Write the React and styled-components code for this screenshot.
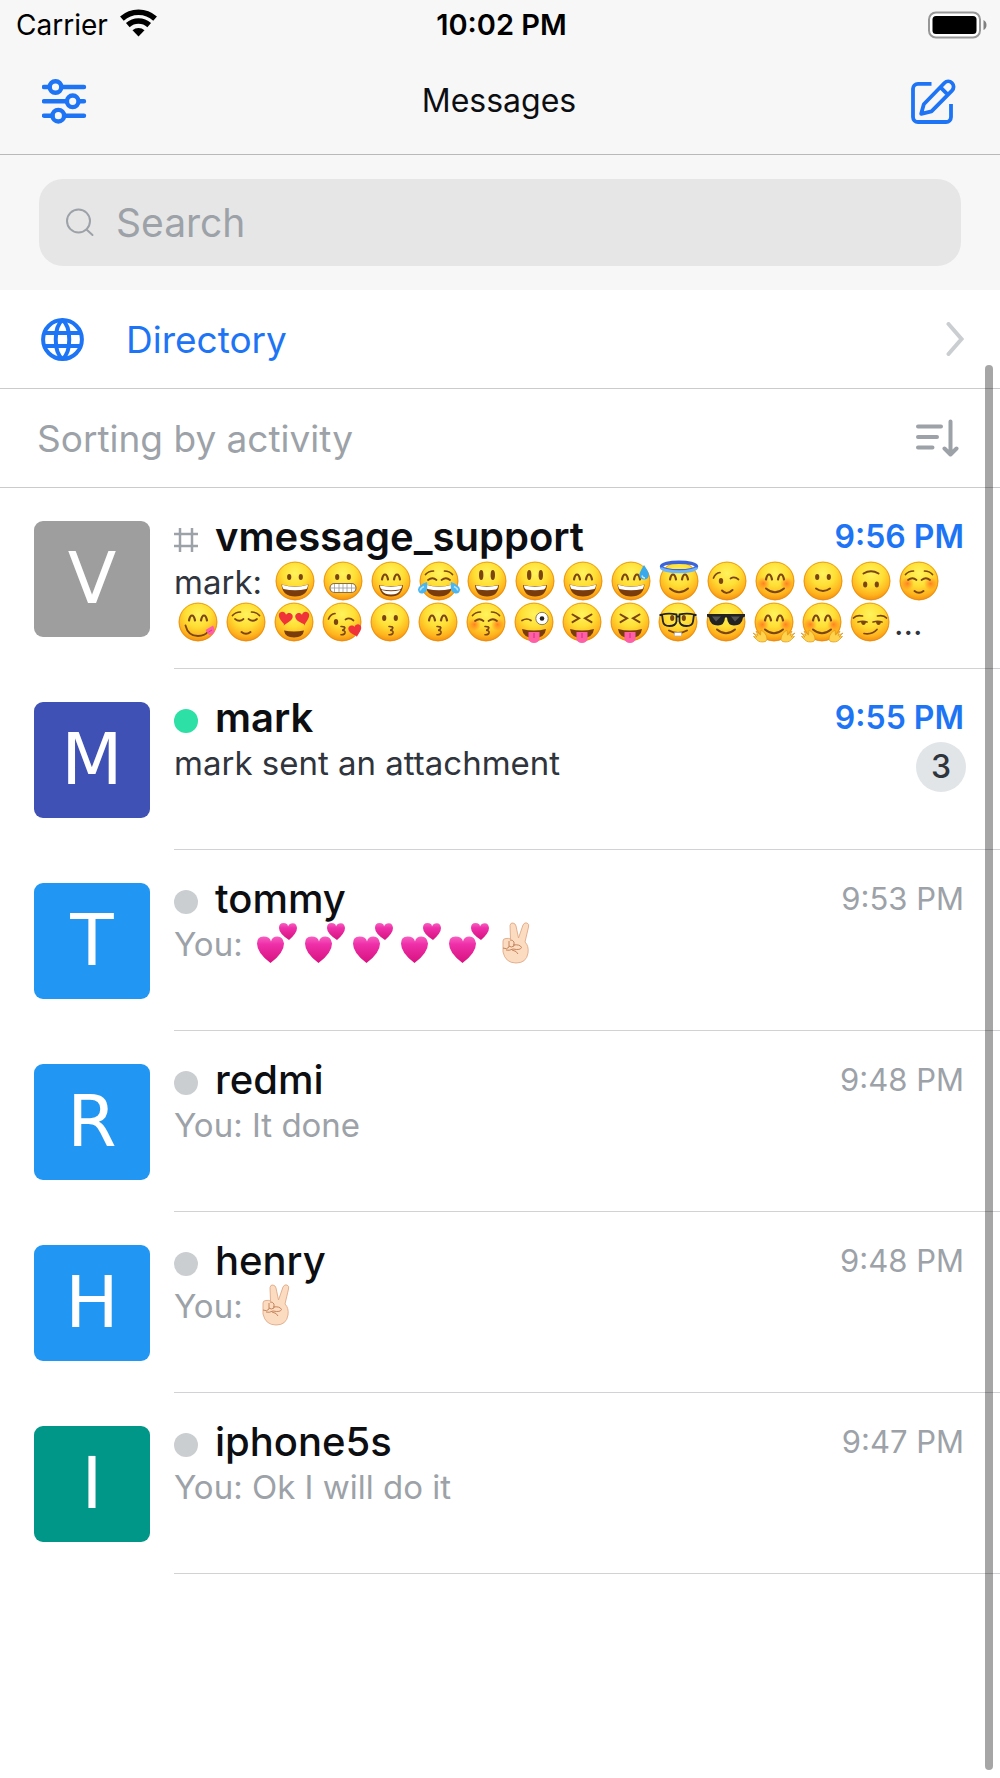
import React from "react";
import styled, { createGlobalStyle } from "styled-components";

const GlobalStyle = createGlobalStyle`
  * {
    box-sizing: border-box;
  }

  body {
    margin: 0;
    background: #fff;
    color: #0d0e12;
    font-family: Inter, "Liberation Sans", sans-serif;
  }
`;

const Screen = styled.div`
  position: relative;
  display: flex;
  flex-direction: column;
  min-height: 100vh;
  overflow: hidden;
`;

const StatusBar = styled.div`
  display: grid;
  grid-template-columns: 1fr auto 1fr;
  align-items: center;
  height: 48px;
  padding: 2px 13px 0 16px;
  background: #f7f7f7;
  color: #000;
  font-size: 28px;
  line-height: 34px;
`;

const Carrier = styled.div`
  display: flex;
  align-items: center;
  gap: 12px;

  svg {
    margin-bottom: 4px;
  }
`;

const Clock = styled.time`
  font-size: 29px;
  font-weight: 600;
`;

const Battery = styled.div`
  display: flex;
  justify-content: flex-end;
`;

const NavBar = styled.header`
  display: grid;
  grid-template-columns: 1fr auto 1fr;
  align-items: center;
  height: 107px;
  padding: 0 44px 0 42px;
  background: #f7f7f7;
  border-bottom: 1px solid #b9b9ba;
`;

const NavTitle = styled.h1`
  margin: 0;
  font-size: 32px;
  font-weight: 400;
  line-height: 40px;
`;

const IconButton = styled.button`
  display: flex;
  justify-self: ${(props) => (props.$end ? "end" : "start")};
  padding: 0;
  border: none;
  background: none;
  color: #1d74f5;
  cursor: pointer;
`;

const SearchArea = styled.div`
  padding: 24px 39px;
  background: #f7f7f7;
`;

const SearchBox = styled.label`
  display: flex;
  align-items: center;
  gap: 20px;
  height: 87px;
  padding: 0 27px;
  border-radius: 24px;
  background: #e6e6e6;
  color: #9ca2a8;
`;

const SearchInput = styled.input`
  flex: 1;
  min-width: 0;
  padding: 0;
  border: none;
  outline: none;
  background: none;
  color: #0d0e12;
  font-family: inherit;
  font-size: 39px;

  &::placeholder {
    color: #9ca2a8;
    opacity: 1;
  }
`;

const MenuLink = styled.a`
  display: flex;
  align-items: center;
  gap: 42px;
  height: 99px;
  padding: 0 36px 0 41px;
  border-bottom: 1px solid #cbcbcd;
  color: #1d74f5;
  font-size: 37px;
  text-decoration: none;

  span {
    flex: 1;
  }
`;

const SortButton = styled.button`
  display: flex;
  align-items: center;
  justify-content: space-between;
  height: 99px;
  padding: 0 40px 0 37px;
  border: none;
  border-bottom: 1px solid #cbcbcd;
  background: none;
  color: #9ca2a8;
  font-family: inherit;
  font-size: 37px;
  text-align: left;
  cursor: pointer;
`;

const RoomList = styled.ul`
  margin: 0;
  padding: 0;
  list-style: none;
`;

const RoomLink = styled.a`
  display: flex;
  gap: 24px;
  padding-left: 34px;
  color: inherit;
  text-decoration: none;
`;

const Avatar = styled.div`
  flex: none;
  display: flex;
  align-items: center;
  justify-content: center;
  width: 116px;
  height: 116px;
  margin-top: 33px;
  border-radius: 9px;
  background: ${(props) => props.$color};
  color: #fff;
  font-family: "DejaVu Sans", sans-serif;
  font-size: 71px;
  line-height: 116px;
`;

const RoomBody = styled.div`
  flex: 1;
  min-width: 0;
  min-height: 181px;
  padding: 26px 36px 18px 0;
  border-bottom: 1px solid #d2d2d4;
`;

const RoomHeader = styled.div`
  display: flex;
  align-items: center;
  gap: 17px;
`;

const RoomName = styled.h2`
  flex: 1;
  min-width: 0;
  margin: 0;
  font-size: 40px;
  font-weight: ${(props) => (props.$unread ? 600 : 500)};
  line-height: 46px;
`;

const Presence = styled.span`
  width: 24px;
  height: 24px;
  margin-top: 6px;
  border-radius: 50%;
  background: ${(props) => (props.$online ? "#2de0a5" : "#cbced1")};
`;

const HashIcon = styled.svg`
  margin-top: 6px;
`;

const RoomTime = styled.time`
  color: ${(props) => (props.$unread ? "#1d74f5" : "#9ca2a8")};
  font-size: ${(props) => (props.$unread ? 32 : 31)}px;
  font-weight: ${(props) => (props.$unread ? 600 : 400)};
  line-height: 46px;
`;

const RoomFooter = styled.div`
  display: flex;
  align-items: flex-start;
  gap: 16px;
  margin-top: 2px;
`;

const Preview = styled.p`
  flex: 1;
  min-width: 0;
  margin: 0;
  color: ${(props) => (props.$unread ? "#2f343d" : "#9ca2a8")};
  font-size: 33px;
  line-height: 41px;
`;

const Badge = styled.span`
  width: 50px;
  height: 50px;
  margin: -1px -2px 0 0;
  border-radius: 50%;
  background: #e1e5e8;
  color: #2f343d;
  font-size: 32px;
  font-weight: 500;
  line-height: 50px;
  text-align: center;
`;

const EmojiSvg = styled.svg`
  width: 40px;
  height: 40px;
  margin: -2px 4px;
  vertical-align: -5px;
  overflow: visible;
`;

const ScrollThumb = styled.div`
  position: absolute;
  top: 365px;
  right: 7px;
  bottom: 8px;
  width: 8px;
  border-radius: 4px;
  background: rgba(0, 0, 0, 0.35);
`;

const Defs = styled.svg`
  position: absolute;
`;

/* ---- emoji parts, drawn on a 40x40 box ---- */

const brown = { stroke: "#7b4511", strokeWidth: 1.7, fill: "none", strokeLinecap: "round" };

const openEyes = (
  <g fill="#7b4511">
    <ellipse cx="14.2" cy="16" rx="2.1" ry="2.9" />
    <ellipse cx="25.8" cy="16" rx="2.1" ry="2.9" />
  </g>
);
const tallEyes = (
  <g fill="#7b4511">
    <ellipse cx="14.2" cy="14" rx="2.2" ry="5" />
    <ellipse cx="25.8" cy="14" rx="2.2" ry="5" />
  </g>
);
const smileEyes = <path {...brown} strokeWidth="2.2" d="M11 18.5q1-5 3-5t3 5M23 18.5q1-5 3-5t3 5" />;
const closedEyes = <path {...brown} d="M9 17q4.500 3.500 8.500 0M22.500 17q4.500 3.500 8.500 0" />;
const happyClosed = <path {...brown} d="M9 19q4.500-3.500 8.500 0M22.500 19q4.500-3.500 8.500 0" />;
const brows = <path {...brown} d="M6.500 13.500q3-3.500 8-3.500M33.500 13.500q-3-3.500-8-3.500" />;
const squintEyes = <path {...brown} strokeWidth="2" d="M10.500 12.500l6.500 3.800-6.500 3.800M29.500 12.500l-6.500 3.800 6.500 3.800" />;
const winkEyes = (
  <g>
    <path {...brown} d="M6.500 17q2-5 6.500-5.500M23.500 17.500q4-2.500 8 1" />
    <ellipse cx="14" cy="20" rx="2.200" ry="3" fill="#7b4511" />
  </g>
);
const smileMouth = <path {...brown} strokeWidth="2" d="M11 27.500q9 7.500 18 0" />;
const smallMouth = <path {...brown} strokeWidth="2" d="M15.500 30q4.500 3.500 9 0" />;
const kissMouth = <path {...brown} strokeWidth="1.600" d="M19 24.500q5-.2 3.500 2.300-1 1.500-2.500 1.500 3.500.2 3 2.400-.6 2.300-4 2" />;
const laughMouth = (
  <g>
    <path d="M6.500 23.500q13.500 4 27 0-1 12-13.500 12t-13.500-12z" fill="#7a3c0b" />
    <path d="M7 23.700q13 3.900 26 0 0 2.600-1.500 4.300-11.500 2.700-23 0-1.500-1.700-1.500-4.300z" fill="#fff" />
  </g>
);
const wideMouth = (
  <g>
    <path d="M8 24q12 2.500 24 0-1 11.500-12 11.500t-12-11.500z" fill="#7a3c0b" />
    <path d="M8.800 24.500q11.200 2.300 22.400 0-.4 3.300-2.200 4-9 1.600-18 0-1.800-.7-2.200-4z" fill="#fff" />
  </g>
);
const tongueMouth = (
  <g>
    <path d="M8 27q12 3 24 0-1 9-12 9t-12-9z" fill="#7a3c0b" />
    <path d="M14.500 30h11v6.500a5.500 4.500 0 0 1-11 0z" fill="#ff5fa5" />
    <path d="M20 31v5" stroke="#dc3285" strokeWidth="1.200" />
  </g>
);
const cheeks = (
  <g fill="url(#cheek)">
    <circle cx="8.500" cy="22.500" r="6.500" />
    <circle cx="31.500" cy="22.500" r="6.500" />
  </g>
);
const heart = "M0 4.500C-1.500 3-6.500.5-6.500-3.500-6.500-7-1.500-8 0-4.500 1.500-8 6.500-7 6.500-3.500 6.500.5 1.500 3 0 6z";

const faces = {
  "😀": <>{openEyes}{laughMouth}</>,
  "😬": (
    <>
      {openEyes}
      <rect x="7" y="22.500" width="26" height="9" rx="4.500" fill="#fff" stroke="#8a6a4a" strokeWidth="1.200" />
      <path d="M7.500 27h25M11.500 23v8M16 23v8M20 23v8M24 23v8M28.500 23v8" stroke="#9a9a9a" strokeWidth=".8" />
    </>
  ),
  "😁": <>{smileEyes}{wideMouth}<path d="M10.500 29q9.500 2.500 19 0-2.500 4.500-9.500 4.500t-9.500-4.500z" fill="#fff" /></>,
  "😂": (
    <>
      {brows}{happyClosed}{laughMouth}
      <path d="M8 21q1.500 10-3.500 11.200T-1 28.500Q-.5 24 8 21zM32 21q-1.500 10 3.500 11.200T41 28.500Q40.500 24 32 21z" fill="#49b5f1" />
      <path d="M5 25.500q-4 2-3.500 4M35 25.500q4 2 3.500 4" stroke="#b6e6ff" strokeWidth="1.500" fill="none" />
    </>
  ),
  "😃": <>{tallEyes}{wideMouth}</>,
  "😄": <>{smileEyes}{laughMouth}</>,
  "😅": (
    <>
      {smileEyes}{laughMouth}
      <path d="M33 4q5.500 8 4.800 10.500a4.800 4.800 0 0 1-9.500 0Q28 12 33 4z" fill="#3aa9ec" />
      <path d="M31 14.500q.5 2.500 3 2.500" stroke="#bdeaff" strokeWidth="1.300" fill="none" />
    </>
  ),
  "😇": (
    <>
      {smileEyes}{smileMouth}
      <ellipse cx="20" cy="5.500" rx="17.500" ry="4.300" fill="none" stroke="#3c63d8" strokeWidth="3.400" />
      <path d="M2.500 6.500a17.500 4.300 0 0 0 35 0" fill="none" stroke="#6fb4f7" strokeWidth="3" />
    </>
  ),
  "😉": <>{winkEyes}<path {...brown} strokeWidth="2" d="M15 29.500q4.500 5 10.500-.5" /></>,
  "😊": <>{cheeks}{smileEyes}{smileMouth}</>,
  "🙂": <>{openEyes}<path {...brown} strokeWidth="2" d="M13 27.500q7 5 14 0" /></>,
  "🙃": (
    <g fill="#7b4511">
      <ellipse cx="14.200" cy="23.500" rx="2.100" ry="2.900" />
      <ellipse cx="25.800" cy="23.500" rx="2.100" ry="2.900" />
      <path {...brown} strokeWidth="2" d="M12.500 12.500q7.500-4.500 15 0" />
    </g>
  ),
  "☺️": <>{cheeks}{brows}{happyClosed}{smallMouth}</>,
  "😋": (
    <>
      {smileEyes}
      <path {...brown} strokeWidth="1.800" d="M7.500 23.500q2.500 10.500 12.500 10.500 7 0 10.500-5" />
      <path d="M27.500 28l7.500-4.500q2.500 4 1 7t-5 2.500z" fill="#ff5fa5" />
      <path d="M30.500 30l3.500-2" stroke="#dc3285" />
    </>
  ),
  "😌": <>{brows}{closedEyes}{smallMouth}</>,
  "😍": (
    <>
      <path d="M10 28.500q10 2 20 0-1 7-10 7t-10-7z" fill="#7a3c0b" />
      <path d={heart} fill="#ef3338" transform="translate(11 17.500) rotate(12) scale(1.080)" />
      <path d={heart} fill="#ef3338" transform="translate(29 17.500) rotate(-12) scale(1.080)" />
    </>
  ),
  "😘": <>{winkEyes}{kissMouth}<path d={heart} fill="#ef3338" transform="translate(33.500 29.500) rotate(-12)" /></>,
  "😗": <>{openEyes}{kissMouth}</>,
  "😙": <>{smileEyes}{kissMouth}</>,
  "😚": <>{cheeks}{brows}{happyClosed}{kissMouth}</>,
  "😜": (
    <>
      {tongueMouth}
      <path {...brown} d="M8 18.500q5-3 9 0" />
      <circle cx="28" cy="16.500" r="6.200" fill="#fff" stroke="#8a7a5a" strokeWidth="1" />
      <circle cx="28" cy="16.500" r="2.300" fill="#222" />
    </>
  ),
  "😝": <>{squintEyes}{tongueMouth}</>,
  "🤓": (
    <>
      {openEyes}
      <path {...brown} strokeWidth="2" d="M11 28.500q9 5 18 0" />
      <path d="M16.500 30.500h7v3.500h-7z" fill="#fff" stroke="#aaa" strokeWidth=".6" />
      <path d="M4 12.500q7-1.800 14.500 0v7q-1 4.500-7 4.500t-6.500-4.500zM36 12.500q-7-1.800-14.500 0v7q1 4.500 7 4.500t6.500-4.500zM18 14.500h4M1.500 13h3M35.500 13h3" fill="none" stroke="#222" strokeWidth="1.800" />
    </>
  ),
  "😎": (
    <>
      <path d="M1 12h38v2.500l-2 1q-1 8-9 8-6.500 0-7-8h-2q-.5 8-7 8-8 0-9-8l-2-1z" fill="#222" />
      <path d="M6 14.500h9l-5 5zM25 14.500h9l-5 5z" fill="#777" opacity=".6" />
      {smileMouth}
    </>
  ),
  "🤗": (
    <>
      {cheeks}{smileEyes}{smileMouth}
      <g stroke="#e29b1c" strokeWidth=".8" fill="#ffd34d">
        <path d="M7 28q4 2 5.500 6t-1 5.500q-6 1.500-9-2l-3-3 3.500.5-4-4 5 2.500-2-4.500 4.500 4z" />
        <path d="M33 28q-4 2-5.500 6t1 5.500q6 1.500 9-2l3-3-3.500.5 4-4-5 2.500 2-4.500-4.500 4z" />
      </g>
    </>
  ),
  "😏": (
    <>
      <path {...brown} d="M3.500 16q3-3.500 9-2M36.500 16q-3-3.500-9-2M8 20q5-1.500 9 0M23 20q5-1.500 9 0M14 31.500q8 1.500 13-4" />
      <path d="M11 20h5q-.5 3-2.500 3T11 20zM26 20h5q-.5 3-2.500 3T26 20z" fill="#7b4511" />
    </>
  ),
};

const symbols = {
  "💕": (
    <g fill="url(#pink)">
      <path d="M14.500 40Q1 30 1 20.500q0-7 6.500-7t7.500 5q1-5 6.500-5T28 20.500Q28 30 14.500 40z" />
      <path d="M33 17Q23 10.500 23 5q0-5 4.500-5T32 3.500Q33.500 0 37 .200T41 5q0 5-8 12z" />
    </g>
  ),
  "✌🏻": (
    <g fill="#fbdcc0" stroke="#e0a987" strokeWidth=".9" strokeLinejoin="round">
      <path d="M14.500 16L14 2.500q.500-3 3-2.500t3 3L22.500 15 27 2q1.500-3 4-2t1.500 4L29 19q4 4 3 11-1.500 10-12 10-10.500 0-13-11V18q0-2.500 3-2.500 2.500-.5 4.500.5z" />
      <path d="M7 25q4 2 6-1v-6M13 23q2 2 5 0v-4q-1.500-2.500-4-2M17 22q7-1 8.500 2.500-1 3-8.500 1.500-4 2-7 1M16 27q5 1 6 4" fill="none" stroke="#c27c55" />
    </g>
  ),
};

function Emoji({ name }) {
  return (
    <EmojiSvg viewBox="0 0 40 40" role="img" aria-label={name}>
      {faces[name] && <circle cx="20" cy="20" r="19.300" fill="url(#face)" />}
      {faces[name] && <circle cx="20" cy="20" r="18.900" fill="none" stroke="#e58a12" strokeWidth=".8" />}
      {faces[name] || symbols[name]}
    </EmojiSvg>
  );
}

function EmojiDefs() {
  return (
    <Defs width="0" height="0" aria-hidden="true">
      <defs>
        <radialGradient id="face" cx=".5" cy=".3" r=".72">
          <stop offset="0" stopColor="#fff35c" />
          <stop offset=".45" stopColor="#ffdf35" />
          <stop offset=".78" stopColor="#ffb41e" />
          <stop offset="1" stopColor="#f28a0c" />
        </radialGradient>
        <radialGradient id="cheek">
          <stop offset="0" stopColor="#ff6a1c" stopOpacity=".75" />
          <stop offset="1" stopColor="#ff6a1c" stopOpacity="0" />
        </radialGradient>
        <linearGradient id="pink" x1="0" y1="0" x2="0" y2="1">
          <stop offset="0" stopColor="#f95fc0" />
          <stop offset=".3" stopColor="#ee2fa8" />
          <stop offset="1" stopColor="#d8127f" />
        </linearGradient>
      </defs>
    </Defs>
  );
}

const rooms = [
  {
    name: "vmessage_support",
    channel: true,
    color: "#9e9e9e",
    time: "9:56 PM",
    unread: true,
    text: "mark: ",
    emojis: [
      "😀", "😬", "😁", "😂", "😃", "😃", "😄", "😅", "😇", "😉", "😊", "🙂", "🙃", "☺️",
      "😋", "😌", "😍", "😘", "😗", "😙", "😚", "😜", "😝", "😝", "🤓", "😎", "🤗", "🤗", "😏",
    ],
    more: true,
  },
  { name: "mark", online: true, color: "#3f51b5", time: "9:55 PM", unread: true, text: "mark sent an attachment", count: 3 },
  { name: "tommy", color: "#2196f3", time: "9:53 PM", text: "You: ", emojis: ["💕", "💕", "💕", "💕", "💕", "✌🏻"] },
  { name: "redmi", color: "#2196f3", time: "9:48 PM", text: "You: It done" },
  { name: "henry", color: "#2196f3", time: "9:48 PM", text: "You: ", emojis: ["✌🏻"] },
  { name: "iphone5s", color: "#009688", time: "9:47 PM", text: "You: Ok I will do it" },
];

function Room({ room }) {
  return (
    <li>
      <RoomLink href="#">
        <Avatar $color={room.color}>{room.name[0].toUpperCase()}</Avatar>
        <RoomBody>
          <RoomHeader>
            {room.channel ? (
              <HashIcon width="24" height="24" viewBox="0 0 24 24" fill="none" stroke="#9ca2a8" strokeWidth="2.500">
                <path d="M6 0v24M18 0v24M0 6h24M0 18h24" />
              </HashIcon>
            ) : (
              <Presence $online={room.online} />
            )}
            <RoomName $unread={room.unread}>{room.name}</RoomName>
            <RoomTime $unread={room.unread}>{room.time}</RoomTime>
          </RoomHeader>
          <RoomFooter>
            <Preview $unread={room.unread}>
              {room.text}
              {(room.emojis || []).map((name, i) => (
                <Emoji key={i} name={name} />
              ))}
              {room.more && "…"}
            </Preview>
            {room.count && <Badge>{room.count}</Badge>}
          </RoomFooter>
        </RoomBody>
      </RoomLink>
    </li>
  );
}

function App() {
  return (
    <Screen>
      <GlobalStyle />
      <EmojiDefs />
      <StatusBar>
        <Carrier>
          Carrier
          <svg width="37" height="28" viewBox="0 0 37 28" fill="none" stroke="#000" strokeWidth="5.500">
            <path d="M1.900 9.600a24.800 24.800 0 0 1 33.200 0M7.800 16.100a16 16 0 0 1 21.400 0" />
            <path d="M18.500 27.500l-6-6.200a9 9 0 0 1 12 0z" fill="#000" stroke="none" />
          </svg>
        </Carrier>
        <Clock>10:02 PM</Clock>
        <Battery>
          <svg width="60" height="28" viewBox="0 0 60 28">
            <rect x="2" y="1.500" width="51" height="25" rx="7" fill="#fff" stroke="#979797" strokeWidth="2" />
            <rect x="5.500" y="5" width="44" height="18" rx="3.500" fill="#000" />
            <path d="M56.500 9q3 1.500 3 5t-3 5z" fill="#808080" />
          </svg>
        </Battery>
      </StatusBar>

      <NavBar>
        <IconButton aria-label="Preferences">
          <svg width="45" height="45" viewBox="0 0 45 45" fill="none" stroke="currentColor" strokeWidth="4.400" strokeLinecap="round">
            <path d="M2 8h5.500M20 8h22M2 22.300h23M37 22.300h5M2 36.700h8.500M23 36.700h19" />
            <circle cx="13.500" cy="8" r="5.800" />
            <circle cx="30.700" cy="22.300" r="5.800" />
            <circle cx="16.300" cy="36.700" r="5.800" />
          </svg>
        </IconButton>
        <NavTitle>Messages</NavTitle>
        <IconButton $end aria-label="New message">
          <svg width="45" height="45" viewBox="0 0 45 45" fill="none" stroke="currentColor" strokeWidth="3.800" strokeLinejoin="round">
            <path d="M20.500 4.800H7a5 5 0 0 0-5 5V38a5 5 0 0 0 5 5h28a5 5 0 0 0 5-5V25" />
            <path d="M10.200 34.800l2.600-9.600L33.400 4a5.300 5.300 0 0 1 7.600 7.600L20.500 32.300zM29.300 8.200l7.500 7.500" />
          </svg>
        </IconButton>
      </NavBar>

      <SearchArea>
        <SearchBox>
          <svg width="30" height="30" viewBox="0 0 30 30" fill="none" stroke="currentColor" strokeWidth="2" strokeLinecap="round">
            <circle cx="12.500" cy="13" r="11.500" />
            <path d="M20.500 21.500l6 5.500" />
          </svg>
          <SearchInput type="search" placeholder="Search" aria-label="Search" />
        </SearchBox>
      </SearchArea>

      <MenuLink href="#">
        <svg width="43" height="43" viewBox="0 0 43 43" fill="none" stroke="currentColor" strokeWidth="4">
          <circle cx="21.500" cy="21.500" r="19.400" />
          <path d="M21.500 2C12.500 9 12.500 34 21.500 41M21.500 2C30.500 9 30.500 34 21.500 41M3 15h37M3 28h37" />
        </svg>
        <span>Directory</span>
        <svg width="18" height="34" viewBox="0 0 18 34" fill="none" stroke="#cbced1" strokeWidth="4" strokeLinecap="round">
          <path d="M2.500 2l13 15-13 15" />
        </svg>
      </MenuLink>

      <SortButton>
        Sorting by activity
        <svg width="44" height="38" viewBox="0 0 44 38" fill="none" stroke="currentColor" strokeWidth="4" strokeLinecap="round" strokeLinejoin="round">
          <path d="M2 7.500h23M2 18h19M2 28.500h14.500M34.500 2.500v33M28.500 29.500l6 6 6-6" />
        </svg>
      </SortButton>

      <RoomList>
        {rooms.map((room) => (
          <Room key={room.name} room={room} />
        ))}
      </RoomList>
      <ScrollThumb />
    </Screen>
  );
}

export default App;
